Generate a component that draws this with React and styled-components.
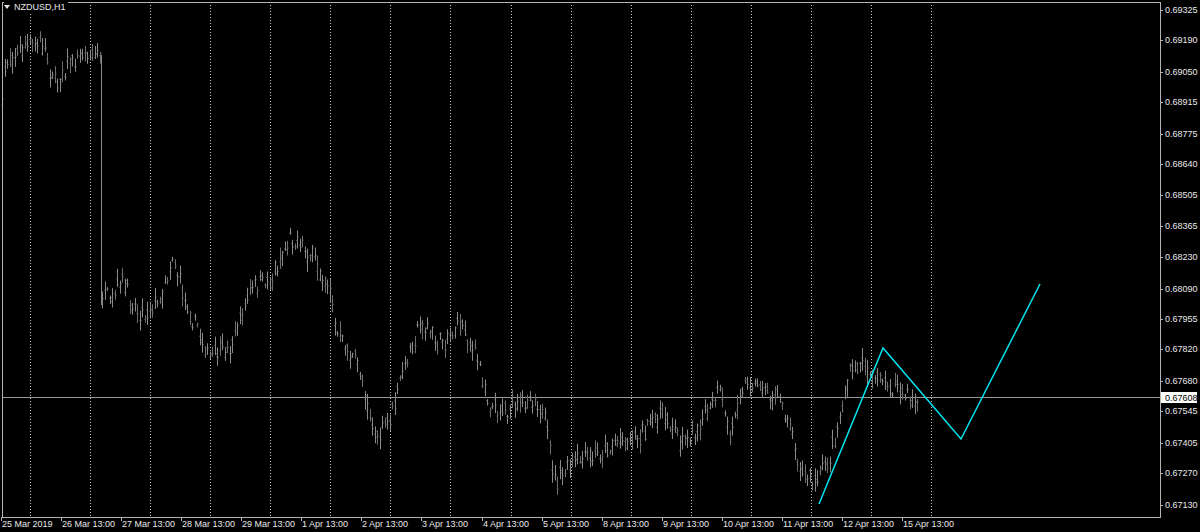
import React from "react";
import styled, { createGlobalStyle } from "styled-components";

const Global = createGlobalStyle`
  html, body { margin: 0; background: #000; }
  body { width: 1200px; height: 532px; overflow: hidden; font-family: "Liberation Sans", Arial, sans-serif; }
`;

const Wrap = styled.div`
  position: relative;
  width: 1200px;
  height: 532px;
  background: #000;
`;

const Title = styled.div`
  position: absolute;
  left: 4px;
  top: 2px;
  display: flex;
  align-items: center;
  gap: 4px;
  color: #e8e8e8;
  font-family: "Liberation Sans", Arial, sans-serif;
  font-size: 9px;
  background: #000;
  padding-right: 2px;
`;

const Tri = styled.span`
  width: 0; height: 0;
  border-left: 3px solid transparent;
  border-right: 3px solid transparent;
  border-top: 4px solid #e8e8e8;
`;

const FONT = "Liberation Sans, Arial, sans-serif";
const L = 2, R = 1160, T = 2, B = 517;
const pY = (p) => 10 + ((0.69325 - p) / 0.02195) * 495;

const prices = ["0.69325","0.69190","0.69050","0.68915","0.68775","0.68640","0.68505","0.68365","0.68230","0.68090","0.67955","0.67820","0.67680","0.67545","0.67405","0.67270","0.67130"];
const dates = ["25 Mar 2019","26 Mar 13:00","27 Mar 13:00","28 Mar 13:00","29 Mar 13:00","1 Apr 13:00","2 Apr 13:00","3 Apr 13:00","4 Apr 13:00","5 Apr 13:00","8 Apr 13:00","9 Apr 13:00","10 Apr 13:00","11 Apr 13:00","12 Apr 13:00","15 Apr 13:00"];

const keys = [[0,140],[5,60],[20,50],[40,40],[55,85],[70,60],[85,50],[100,58],[102,290],[110,305],[120,280],[140,315],[160,300],[172,255],[185,300],[210,360],[230,345],[250,290],[270,280],[290,235],[310,255],[330,290],[335,330],[360,370],[375,440],[390,420],[400,380],[420,322],[440,345],[460,322],[475,355],[490,405],[510,410],[535,395],[545,425],[555,482],[570,465],[600,452],[620,440],[640,435],[660,412],[680,440],[700,425],[720,392],[730,440],[740,385],[760,385],[780,400],[790,425],[800,470],[815,482],[830,455],[850,370],[860,362],[880,380],[900,392],[918,405]];

function interp(x) {
  for (let i = 1; i < keys.length; i++) {
    if (x <= keys[i][0]) {
      const [x0, y0] = keys[i - 1], [x1, y1] = keys[i];
      return y0 + ((y1 - y0) * (x - x0)) / (x1 - x0 || 1);
    }
  }
  return keys[keys.length - 1][1];
}

let seed = 7;
const rnd = () => { seed = (seed * 16807) % 2147483647; return seed / 2147483647; };

const bars = [];
for (let x = 2; x <= 918; x += 2.5) {
  const y = interp(x) + (rnd() - 0.5) * 14;
  const o = y + (rnd() - 0.5) * 10, c = y + (rnd() - 0.5) * 10;
  const h = Math.min(o, c) - rnd() * 9 - 1, l = Math.max(o, c) + rnd() * 9 + 1;
  bars.push({ x: Math.round(x) + 0.5, o, c, h, l });
}
bars.push({ x: 101.5, o: 60, c: 295, h: 55, l: 305 });

const gridX = Array.from({ length: 16 }, (_, i) => 30.5 + Math.round(i * 60.07));

export default function App() {
  return (
    <Wrap>
      <Global />
      <svg width="1200" height="532" style={{ display: "block" }}>
        {gridX.map((x) => (
          <line key={x} x1={x} x2={x} y1={T} y2={B} stroke="#c8c8c8" strokeDasharray="1 2" />
        ))}
        <line x1={L} x2={R} y1={397.5} y2={397.5} stroke="#9a9a9a" />
        {bars.map((b, i) => (
          <g key={i} stroke={i % 3 ? "#8a8a8a" : "#6e6e6e"}>
            <line x1={b.x} x2={b.x} y1={b.h} y2={b.l} />
            <line x1={b.x - 1} x2={b.x} y1={b.o} y2={b.o} />
            <line x1={b.x} x2={b.x + 1} y1={b.c} y2={b.c} />
          </g>
        ))}
        <polyline points="819,504 883,348 961,439 1040,284" fill="none" stroke="#00e5f0" strokeWidth="1.5" />
        <rect x={L + 0.5} y={T + 0.5} width={R - L} height={B - T} fill="none" stroke="#b4b4b4" />
        {prices.map((p) => (
          <g key={p}>
            <line x1={R} x2={R + 3} y1={Math.round(pY(+p)) + 0.5} y2={Math.round(pY(+p)) + 0.5} stroke="#b4b4b4" />
            <text x={R + 5} y={pY(+p) + 3} fill="#e8e8e8" fontSize="9" fontFamily={FONT}>{p}</text>
          </g>
        ))}
        <rect x={R + 1} y={392} width={36} height={11} fill="#fff" />
        <text x={R + 5} y={401} fill="#000" fontSize="9" fontFamily={FONT}>0.67608</text>
        {dates.map((d, i) => {
          const x = 1 + Math.round(i * 60.07);
          return (
            <g key={d}>
              <line x1={x + 0.5} x2={x + 0.5} y1={B} y2={B + 4} stroke="#b4b4b4" />
              <text x={x + 1} y={527} fill="#e8e8e8" fontSize="9" fontFamily={FONT}>{d}</text>
            </g>
          );
        })}
      </svg>
      <Title><Tri />NZDUSD,H1</Title>
    </Wrap>
  );
}
